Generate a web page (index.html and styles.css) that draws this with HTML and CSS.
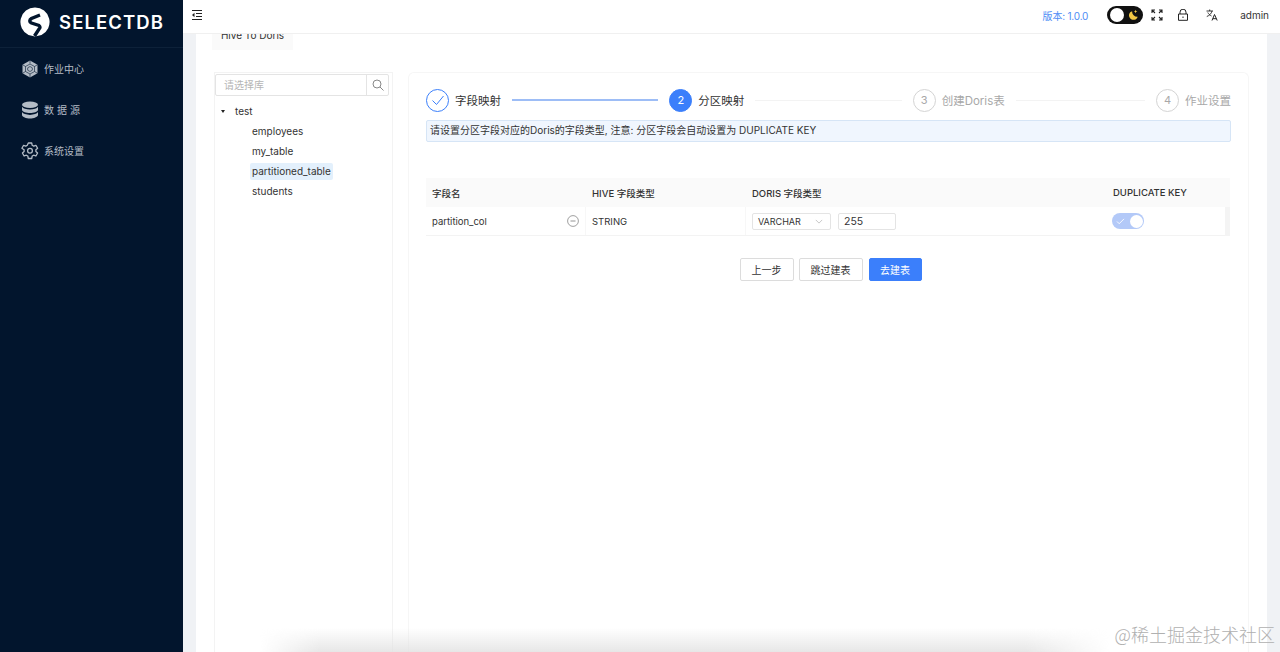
FILE: index.html
```html
<!DOCTYPE html>
<html lang="zh-CN">
<head>
  <meta charset="UTF-8">
  <title>SelectDB</title>
  <link rel="stylesheet" href="styles.css">
</head>
<body>

<div class="layout">
  <!-- Menu lateral -->
  <aside class="sidebar">
    <div class="logo">
      <svg class="logo-mark" viewBox="0 0 30 30" width="30" height="30">
        <path d="M15 0.500a14.500 14.500 0 0 1 6.500 27.500L15 29.500 8.500 28A14.500 14.500 0 0 1 15 .5z" fill="#fff"/>
        <path d="M20 8 11.500 11.500Q8 14 11.500 16L19 18.500Q21 20 19 22L14.500 29" fill="none" stroke="#02152d" stroke-width="3.400"/>
      </svg>
      <span class="logo-text">SELECTDB</span>
    </div>
    <nav class="menu">
      <a class="menu-item">
        <svg viewBox="0 0 18 18" width="18" height="18"><path d="M9 .5 16.500 4.700v8.600L9 17.500 1.500 13.300V4.700z" fill="#b4bcc6"/><path d="M9 .5v3M1.500 4.700 4.500 6.500 9 4l4.500 2.500 3-1.800M4.500 6.500v5L9 14l4.500-2.500v-5M1.500 13.300l3-1.800M16.500 13.300l-3-1.800M9 14v3.500M6.700 7.800 9 6.500l2.300 1.300v2.400L9 11.500l-2.300-1.300z" fill="none" stroke="#02152d" stroke-width=".6"/></svg>
        <span>作业中心</span>
      </a>
      <a class="menu-item">
        <svg viewBox="0 0 18 18" width="18" height="18"><ellipse cx="9" cy="3.700" rx="8" ry="3.200" fill="#b4bcc6"/><path d="M1 5.800c1 1.800 4.200 2.800 8 2.800s7-1 8-2.800v3.300c-.6 1.900-4 3-8 3s-7.400-1.100-8-3zM1 11.100c1 1.800 4.200 2.800 8 2.800s7-1 8-2.800v3.200c-.6 1.900-4 3.200-8 3.200s-7.400-1.300-8-3.200z" fill="#b4bcc6"/></svg>
        <span class="spaced">数据源</span>
      </a>
      <a class="menu-item">
        <svg viewBox="0 0 18 18" width="18" height="18"><path d="M7.300 1h3.400l.5 2.300 1.500.8 2.200-.8 1.700 3-1.700 1.500v1.700l1.700 1.500-1.700 3-2.200-.8-1.500.8-.5 2.500H7.300l-.5-2.500-1.500-.8-2.200.8-1.700-3 1.700-1.500V7.800L.9 6.300l1.700-3 2.200.8 1.500-.8z" fill="none" stroke="#b4bcc6" stroke-width="1.300" stroke-linejoin="round"/><circle cx="9" cy="8.700" r="2.400" fill="none" stroke="#b4bcc6" stroke-width="1.300"/></svg>
        <span>系统设置</span>
      </a>
    </nav>
  </aside>

  <div class="main">
    <!-- Barra superior -->
    <header class="topbar">
      <svg class="collapse" viewBox="0 0 12 12" width="12" height="12"><path d="M1 1.500h10M5 4.500h6M5 7.500h6M1 10.500h10" stroke="#222" stroke-width="1.100" fill="none"/><path d="M3.500 3.700 1 6l2.500 2.300z" fill="#222"/></svg>
      <div class="topbar-right">
        <span class="version">版本: 1.0.0</span>
        <span class="theme-toggle">
          <span class="theme-knob"></span>
          <svg viewBox="0 0 14 14" width="12" height="12"><path d="M6 2.500a5.200 5.200 0 1 0 6.500 6.500A6 6 0 0 1 6 2.500z" fill="#f2c744"/><path d="M10 1l.6 1.400L12 3l-1.400.6L10 5l-.6-1.400L8 3l1.400-.6z" fill="#f2c744"/></svg>
        </span>
        <svg class="tool" viewBox="0 0 12 12" width="12" height="12"><path d="M1 4V1h3M1 1l3 3M11 4V1H8M11 1 8 4M1 8v3h3M1 11l3-3M11 8v3H8M11 11 8 8" stroke="#222" stroke-width="1.100" fill="none"/></svg>
        <svg class="tool" viewBox="0 0 12 12" width="12" height="12"><path d="M3 5V3.200a3 3 0 0 1 6 0V5M1.500 5h9v6.300h-9z" stroke="#222" stroke-width="1" fill="none"/><path d="M5.500 7.500h1v1.500h-1z" fill="#222"/></svg>
        <svg class="tool" viewBox="0 0 12 12" width="12" height="12"><path d="M0.500 2h6.500M3.700 .5V2M6 2C5.500 4.500 3.500 6.500 .8 7.500M1.800 3.500C2.500 5 4 6.300 5.500 7" stroke="#222" stroke-width=".9" fill="none"/><path d="M6 11.500 8.500 5.500 11.200 11.500M6.900 9.700h3.400" stroke="#222" stroke-width="1" fill="none"/></svg>
        <span class="user">admin</span>
      </div>
    </header>

    <div class="content">
      <div class="page">
        <div class="tab">Hive To Doris</div>
        <div class="workspace">
          <!-- Arbol de tablas -->
          <section class="tree-panel">
            <div class="search">
              <span class="search-input">请选择库</span>
              <span class="search-btn">
                <svg viewBox="0 0 12 12" width="12" height="12"><circle cx="5" cy="5" r="4" fill="none" stroke="#888" stroke-width="1"/><path d="M8 8l3.500 3.500" stroke="#888" stroke-width="1"/></svg>
              </span>
            </div>
            <div class="tree-root"><span class="caret"></span>test</div>
            <ul class="tree-list">
              <li>employees</li>
              <li>my_table</li>
              <li class="selected">partitioned_table</li>
              <li>students</li>
            </ul>
          </section>

          <!-- Asistente -->
          <section class="wizard">
            <div class="steps">
              <div class="step done">
                <span class="step-icon">
                  <svg viewBox="0 0 14 14" width="14" height="14"><path d="M1.500 7.500 5.500 11.500 12.500 3" fill="none" stroke="#3b7ffb" stroke-width="1"/></svg>
                </span>
                <span class="step-title">字段映射</span>
                <span class="step-line"></span>
              </div>
              <div class="step active">
                <span class="step-icon">2</span>
                <span class="step-title">分区映射</span>
                <span class="step-line"></span>
              </div>
              <div class="step">
                <span class="step-icon">3</span>
                <span class="step-title">创建Doris表</span>
                <span class="step-line"></span>
              </div>
              <div class="step last">
                <span class="step-icon">4</span>
                <span class="step-title">作业设置</span>
              </div>
            </div>

            <div class="notice">请设置分区字段对应的Doris的字段类型, 注意: 分区字段会自动设置为 DUPLICATE KEY</div>

            <div class="grid">
              <div class="grid-row grid-head">
                <div class="cell">字段名</div>
                <div class="cell">HIVE 字段类型</div>
                <div class="cell">DORIS 字段类型</div>
                <div class="cell">DUPLICATE KEY</div>
              </div>
              <div class="grid-row grid-body">
                <div class="cell name-cell">
                  partition_col
                  <svg viewBox="0 0 12 12" width="12" height="12"><circle cx="6" cy="6" r="5.400" fill="none" stroke="#888" stroke-width=".8"/><path d="M3.500 6h5" stroke="#888" stroke-width=".9"/></svg>
                </div>
                <div class="cell">STRING</div>
                <div class="cell type-cell">
                  <span class="select">VARCHAR
                    <svg viewBox="0 0 10 6" width="8" height="5"><path d="M1 1l4 4 4-4" fill="none" stroke="#bbb" stroke-width="1"/></svg>
                  </span>
                  <span class="length">255</span>
                </div>
                <div class="cell">
                  <span class="switch">
                    <svg viewBox="0 0 10 8" width="9" height="7"><path d="M1 4l2.500 2.500L9 1" fill="none" stroke="#fff" stroke-width="1"/></svg>
                    <span class="switch-knob"></span>
                  </span>
                </div>
              </div>
            </div>

            <div class="actions">
              <button class="btn">上一步</button>
              <button class="btn btn-wide">跳过建表</button>
              <button class="btn btn-primary">去建表</button>
            </div>
          </section>
        </div>
      </div>
    </div>
  </div>
</div>

<div class="bottom-shade"></div>
<div class="watermark">@稀土掘金技术社区</div>

</body>
</html>
```

FILE: styles.css
```css
:root {
  --color-nav: #02152d;
  --color-blue: #3b7ffb;
  --color-text: #333;
  --color-muted: #a8a8a8;
  --color-line: #f3f3f3;
  --color-border: #e4e4e4;
}

html, body {
  margin: 0;
  height: 100%;
  overflow: hidden;
}

body {
  font-family: Inter, "Noto Sans CJK SC", sans-serif;
  font-size: 11px;
  color: var(--color-text);
  background-color: white;
}

.layout {
  display: flex;
  height: 652px;
}

/* Menu lateral */
.sidebar {
  width: 183px;
  flex-shrink: 0;
  background-color: var(--color-nav);
  color: #b4bcc6;
}

.logo {
  display: flex;
  align-items: center;
  height: 48px;
  box-sizing: border-box;
  padding: 0 0 3px 20px;
  gap: 9px;
  border-bottom: 1px solid #0d2139;
}

.logo-text {
  font-size: 18.500px;
  font-weight: 600;
  letter-spacing: 1.100px;
  color: white;
}

.menu {
  display: flex;
  flex-direction: column;
  padding-top: 12px;
  gap: 23px;
}

.menu-item {
  display: flex;
  align-items: center;
  gap: 5px;
  height: 18px;
  padding-left: 21px;
  font-size: 10px;
  line-height: 18px;
}

.spaced {
  letter-spacing: 3px;
}

/* Barra superior */
.main {
  flex: 1;
  min-width: 0;
  display: flex;
  flex-direction: column;
}

.topbar {
  position: relative;
  z-index: 2;
  height: 34px;
  flex-shrink: 0;
  box-sizing: border-box;
  display: flex;
  align-items: center;
  justify-content: space-between;
  padding: 0 11px 3px 8px;
  background-color: white;
  border-bottom: 1px solid #f0f0f0;
}

.topbar-right {
  display: flex;
  align-items: center;
}

.version {
  color: #4d8cf5;
  font-size: 10px;
  letter-spacing: -0.200px;
  margin-right: 19px;
}

.theme-toggle {
  display: flex;
  align-items: center;
  justify-content: space-between;
  box-sizing: border-box;
  width: 36px;
  height: 18px;
  padding: 0 4px 0 3px;
  border-radius: 9px;
  background-color: #111;
  margin-right: 8px;
}

.theme-knob {
  width: 14px;
  height: 14px;
  border-radius: 50%;
  background-color: white;
}

.tool {
  margin-right: 14px;
}

.tool:nth-of-type(2) {
  margin-right: 17px;
}

.tool:nth-of-type(3) {
  margin-right: 22px;
}

.user {
  font-size: 10px;
}

/* Contenido */
.content {
  flex: 1;
  min-height: 0;
  padding: 0 13px;
  background-color: #f0f2f5;
}

.page {
  display: flow-root;
  height: 100%;
  background-color: white;
  padding: 0 18px 0 16px;
}

.tab {
  width: 81px;
  height: 32px;
  margin: -16px 0 0;
  padding-top: 9px;
  box-sizing: border-box;
  background-color: #fafafa;
  font-size: 10px;
  line-height: 16px;
  text-align: center;
}

.workspace {
  display: flex;
  gap: 15px;
  padding: 22px 0 0 2px;
  height: 600px;
}

.tree-panel {
  width: 179px;
  flex-shrink: 0;
  box-sizing: border-box;
  border-left: 1px solid var(--color-line);
  border-right: 1px solid var(--color-line);
  border-top: 1px solid var(--color-line);
  padding-top: 1px;
}

.search {
  display: flex;
  height: 22px;
  box-sizing: border-box;
  margin-right: 3px;
  border: 1px solid var(--color-border);
  border-radius: 2px;
}

.search-input {
  flex: 1;
  padding-left: 8px;
  line-height: 20px;
  color: #b5b5b5;
  font-size: 10px;
}

.search-btn {
  display: flex;
  align-items: center;
  justify-content: center;
  width: 21px;
  border-left: 1px solid var(--color-border);
}

.tree-root {
  display: flex;
  align-items: center;
  height: 20px;
  margin-top: 5px;
  padding-left: 6px;
  font-size: 10px;
}

.caret {
  width: 0;
  height: 0;
  margin-right: 10px;
  border-left: 2.500px solid transparent;
  border-right: 2.500px solid transparent;
  border-top: 3px solid #222;
}

.tree-list {
  list-style: none;
  margin: 2px 0 0;
  padding: 0 0 0 35px;
  font-size: 10px;
}

.tree-list li {
  width: fit-content;
  height: 17px;
  line-height: 17px;
  margin-bottom: 3px;
  padding: 0 2px;
  border-radius: 2px;
}

.tree-list .selected {
  background-color: #e3f0fc;
}

/* Asistente */
.wizard {
  flex: 1;
  min-width: 0;
  box-sizing: border-box;
  padding: 15px 17px 0 17px;
  border: 1px solid #f6f6f6;
  border-bottom: none;
  border-radius: 6px 6px 0 0;
}

.steps {
  display: flex;
  align-items: center;
  height: 24px;
}

.step {
  flex: 1;
  display: flex;
  align-items: center;
  color: var(--color-muted);
}

.step.last {
  flex: none;
}

.step-icon {
  display: flex;
  align-items: center;
  justify-content: center;
  box-sizing: border-box;
  width: 23px;
  height: 23px;
  margin-right: 6px;
  border: 1px solid #d4d4d4;
  border-radius: 50%;
  font-size: 11px;
}

.step-title {
  font-size: 11.500px;
  white-space: nowrap;
}

.step-line {
  flex: 1;
  height: 1px;
  margin: 0 11px;
  background-color: var(--color-line);
}

.step.done .step-icon {
  border-color: var(--color-blue);
}

.step.done .step-title, .step.active .step-title {
  color: var(--color-text);
}

.step.done .step-line {
  height: 1.500px;
  background-color: #9dbdf6;
}

.step.active .step-icon {
  background-color: var(--color-blue);
  border-color: var(--color-blue);
  color: white;
}

.notice {
  height: 22px;
  box-sizing: border-box;
  margin-top: 8px;
  padding-left: 3px;
  border: 1px solid #d6e5f6;
  border-radius: 2px;
  background-color: #f0f6fe;
  font-size: 10px;
  line-height: 19px;
}

/* Tabla */
.grid {
  margin-top: 36px;
  width: 804px;
}

.grid-row {
  display: grid;
  grid-template-columns: 160px 160px 360px 1fr;
  box-sizing: border-box;
  height: 29px;
}

.grid-head {
  background-color: #fafafa;
  font-size: 9.500px;
  font-weight: 500;
}

.grid-body {
  font-size: 9.500px;
  margin-right: 5px;
  border-bottom: 1px solid var(--color-line);
  box-shadow: 5px 0 0 #f4f4f4;
}

.cell {
  display: flex;
  align-items: center;
  padding-left: 6px;
  border-right: 1px solid #f7f7f7;
}

.grid-head .cell {
  border-right: none;
}

.cell:last-child {
  border-right: none;
  padding-left: 7px;
}

.grid-body .cell:last-child {
  padding-left: 6px;
}

.name-cell {
  justify-content: space-between;
  padding-right: 6px;
}

.type-cell {
  gap: 7px;
  border-right: none;
}

.select, .length {
  display: flex;
  align-items: center;
  box-sizing: border-box;
  height: 17px;
  border: 1px solid var(--color-border);
  border-radius: 2px;
}

.select {
  width: 79px;
  justify-content: space-between;
  padding: 0 7px 0 5px;
  font-size: 9px;
}

.length {
  width: 58px;
  padding-left: 5px;
  font-size: 10.500px;
}

.switch {
  display: flex;
  align-items: center;
  box-sizing: border-box;
  justify-content: space-between;
  width: 32px;
  height: 16px;
  padding: 0 1.500px 0 4px;
  border-radius: 8px;
  background-color: #b3c9f8;
}

.switch-knob {
  width: 13px;
  height: 13px;
  border-radius: 50%;
  background-color: white;
}

.actions {
  display: flex;
  justify-content: center;
  gap: 5px;
  margin-top: 22px;
  padding-left: 4px;
}

.btn {
  width: 54px;
  height: 23px;
  padding: 0;
  border: 1px solid #dcdcdc;
  border-radius: 2px;
  background-color: white;
  color: var(--color-text);
  font-family: inherit;
  font-size: 10px;
}

.btn-wide {
  width: 64px;
}

.btn-primary {
  width: 53px;
  margin-left: 1px;
  background-color: var(--color-blue);
  border-color: var(--color-blue);
  color: white;
}

/* Sombra inferior y marca de agua */
.bottom-shade {
  position: absolute;
  left: 260px;
  right: 170px;
  bottom: 0;
  height: 24px;
  background: linear-gradient(to bottom, rgba(225, 225, 225, 0), rgba(225, 225, 225, 0.8));
  -webkit-mask-image: linear-gradient(to right, transparent, black 60px, black 90%, transparent);
  mask-image: linear-gradient(to right, transparent, black 60px, black 90%, transparent);
}

.watermark {
  position: absolute;
  right: 5px;
  bottom: 6px;
  font-family: "Noto Sans CJK SC", sans-serif;
  font-size: 18px;
  font-weight: 300;
  line-height: 24px;
  color: #b0b0b0;
}
```
